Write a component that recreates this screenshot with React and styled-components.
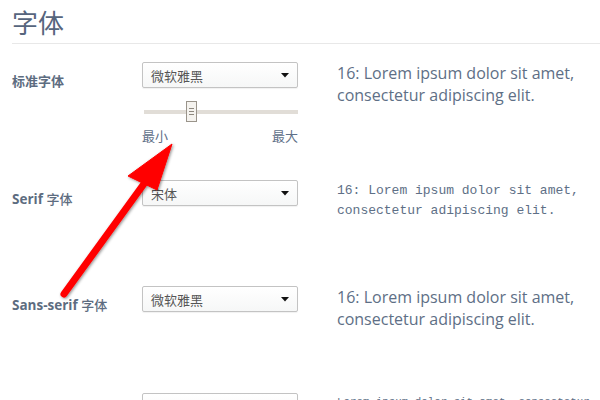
import React from "react";
import styled, { createGlobalStyle } from "styled-components";

const Global = createGlobalStyle`
  html, body { margin: 0; padding: 0; background: #fff; }
  body { font-family: "Noto Sans", "Noto Sans CJK SC", sans-serif; overflow: hidden; }
`;

const Page = styled.div`
  position: relative;
  width: 600px;
  height: 400px;
  overflow: hidden;
  padding-left: 12px;
  box-sizing: border-box;
`;

const Heading = styled.h1`
  margin: 0;
  padding: 6px 0 6px;
  font-size: 26px;
  line-height: 31px;
  font-weight: 400;
  color: #56657d;
  font-family: "Noto Sans CJK SC", sans-serif;
  border-bottom: 1px solid #e8e8e8;
`;

const Rows = styled.div`
  padding-top: 18px;
  display: flex;
  flex-direction: column;
`;

const Row = styled.div`
  display: grid;
  grid-template-columns: 130px 156px 1fr;
  align-items: start;
  min-height: ${(p) => p.$h}px;
`;

const Label = styled.div`
  padding-top: 10px;
  font-size: 13.5px;
  line-height: 18px;
  font-weight: 700;
  color: #5d6c80;
  font-family: "Open Sans", "Noto Sans CJK SC", sans-serif;
  white-space: nowrap;
`;

const Cjk = styled.span`
  font-weight: ${(p) => (p.$bold ? 700 : 500)};
  font-size: 13px;
  font-family: "Noto Sans CJK SC", sans-serif;
`;

const Control = styled.div`
  display: flex;
  flex-direction: column;
`;

const Select = styled.div`
  height: 26px;
  box-sizing: border-box;
  border: 1px solid #c3c3c3;
  border-radius: 2px;
  background: linear-gradient(#ffffff, #f6f7f7);
  box-shadow: 0 1px 1px rgba(0, 0, 0, 0.06);
  display: flex;
  align-items: center;
  justify-content: space-between;
  padding: 0 8px 0 8px;
  font-size: 13px;
  color: #555;
  font-family: "Noto Sans CJK SC", sans-serif;
`;

const Caret = () => (
  <svg width="8" height="5" viewBox="0 0 8 5">
    <path d="M0 0H8L4 4.5Z" fill="#111" />
  </svg>
);

const SliderBox = styled.div`
  position: relative;
  height: 22px;
  margin-top: 13px;
  display: flex;
  align-items: center;
`;

const Track = styled.div`
  width: 156px;
  margin-left: 2px;
  height: 4px;
  background: #e1ddd7;
`;

const Thumb = styled.div`
  position: absolute;
  left: 44px;
  top: 0;
  width: 11px;
  height: 21px;
  box-sizing: border-box;
  border: 1px solid #9a948b;
  background: #f5f3ef;
  display: flex;
  flex-direction: column;
  justify-content: center;
  align-items: center;
  gap: 2px;
  &::before, &::after, span {
    content: "";
    display: block;
    width: 5px;
    height: 1px;
    background: #8e887f;
  }
`;

const Ends = styled.div`
  display: flex;
  justify-content: space-between;
  margin-top: 4px;
  font-size: 13px;
  line-height: 18px;
  color: #5f7088;
  font-family: "Noto Sans CJK SC", sans-serif;
`;

const Preview = styled.div`
  padding-left: 39px;
  margin-top: ${(p) => p.$top || 0}px;
  font-size: ${(p) => p.$size}px;
  line-height: ${(p) => p.$lh}px;
  color: #5e6f86;
  font-family: ${(p) =>
    p.$mono ? '"Liberation Mono", monospace' : '"Open Sans", sans-serif'};
  white-space: pre;
`;

const Overlay = styled.svg`
  position: absolute;
  left: 0;
  top: 0;
  pointer-events: none;
`;

const text = "16: Lorem ipsum dolor sit amet,\nconsectetur adipiscing elit.";

export default function App() {
  return (
    <>
      <Global />
      <Page>
        <Heading>字体</Heading>
        <Rows>
          <Row $h={118}>
            <Label>
              <Cjk $bold>标准字体</Cjk>
            </Label>
            <Control>
              <Select>
                微软雅黑
                <Caret />
              </Select>
              <SliderBox>
                <Track />
                <Thumb>
                  <span />
                </Thumb>
              </SliderBox>
              <Ends>
                <span>最小</span>
                <span>最大</span>
              </Ends>
            </Control>
            <Preview $size={16} $lh={22} $top={0}>
              {text}
            </Preview>
          </Row>
          <Row $h={106}>
            <Label>
              Serif <Cjk>字体</Cjk>
            </Label>
            <Select>
              宋体
              <Caret />
            </Select>
            <Preview $mono $size={13} $lh={20} $top={1}>
              {text}
            </Preview>
          </Row>
          <Row $h={107}>
            <Label>
              Sans-serif <Cjk>字体</Cjk>
            </Label>
            <Select>
              微软雅黑
              <Caret />
            </Select>
            <Preview $size={16} $lh={22} $top={0}>
              {text}
            </Preview>
          </Row>
          <Row $h={40}>
            <Label />
            <Select />
            <Preview $mono $size={10.8} $lh={16} $top={1}>
              {"Lorem ipsum dolor sit amet, consectetur"}
            </Preview>
          </Row>
        </Rows>
        <Overlay width="600" height="400" viewBox="0 0 600 400">
          <defs>
            <filter id="sh" x="-20%" y="-20%" width="140%" height="140%">
              <feDropShadow dx="1" dy="1" stdDeviation="1.5" floodColor="#000" floodOpacity="0.45" />
            </filter>
          </defs>
          <g filter="url(#sh)" fill="#ff0000" stroke="#ff0000">
            <line x1="64" y1="294" x2="146" y2="181" strokeWidth="7" strokeLinecap="round" />
            <polygon points="172,144 128,176 157,190" strokeWidth="1" strokeLinejoin="round" />
          </g>
        </Overlay>
      </Page>
    </>
  );
}
